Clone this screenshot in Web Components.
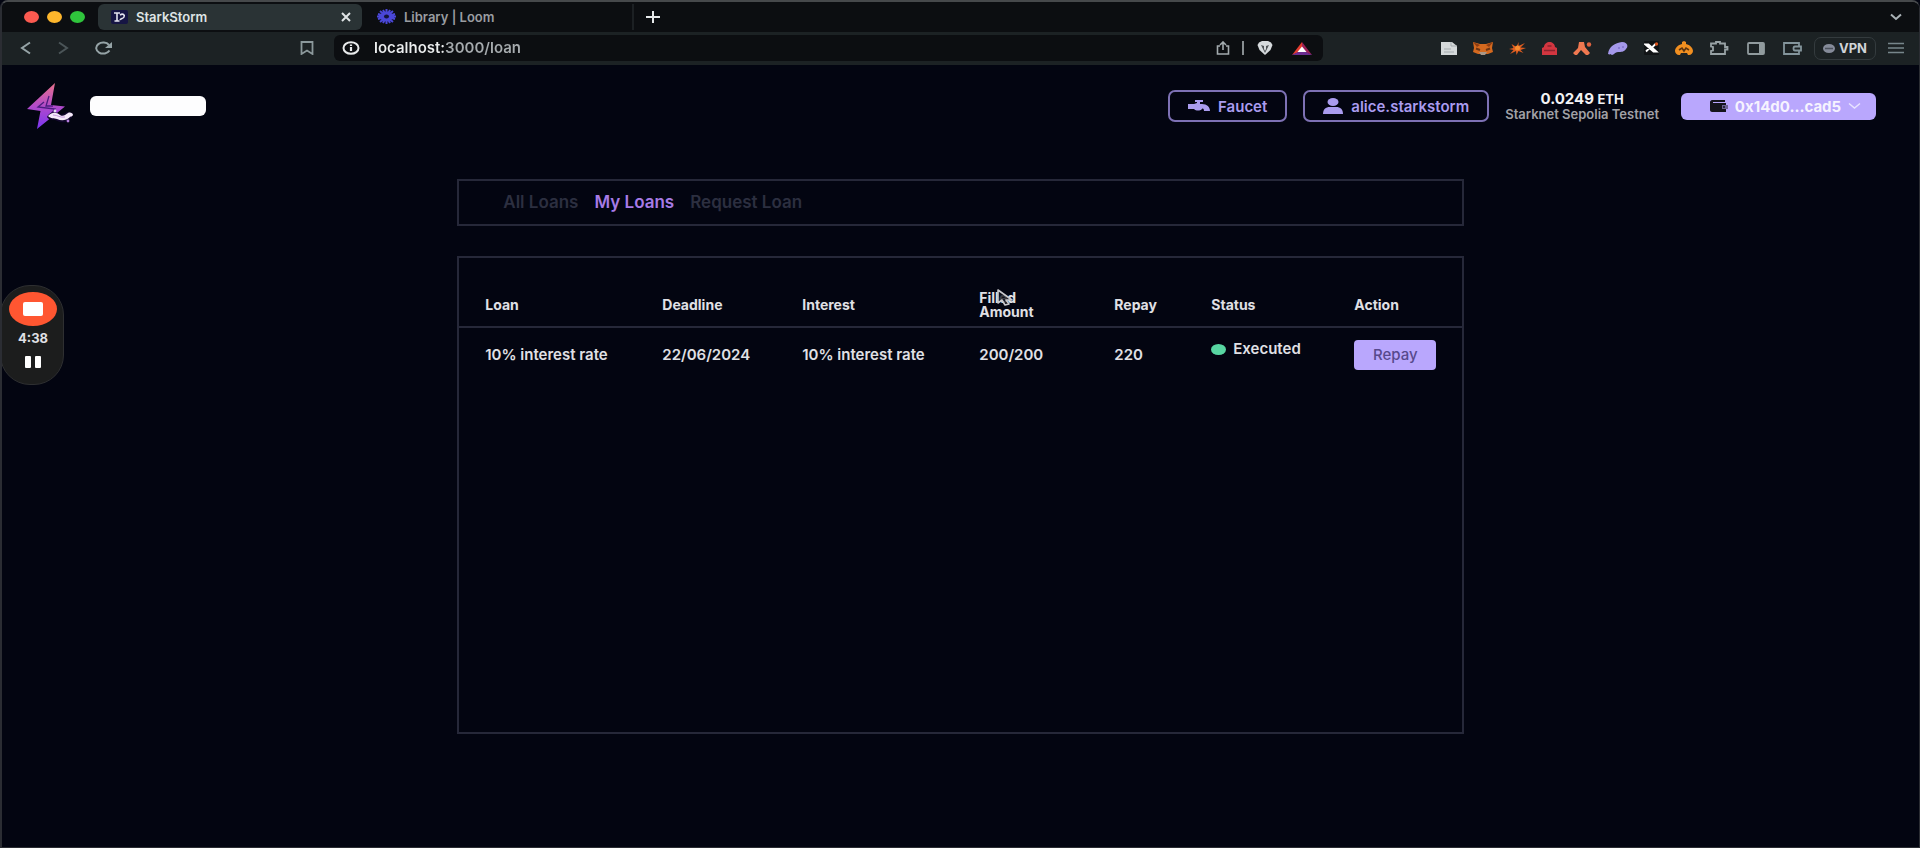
<!DOCTYPE html>
<html lang="en">
<head>
<meta charset="utf-8">
<title>StarkStorm</title>
<style>
html,body{margin:0;min-height:100%;background:#030511}
body{font-family:Inter,"Liberation Sans",sans-serif;font-weight:600;color:#e0e0e5}
</style>
</head>
<body>
<stark-window></stark-window>
<script>
const ICONS = {
  close: [10,10,'<path d="M1 1l8 8M9 1l-8 8" stroke="#dfe3e5" stroke-width="2"/>'],
  plus: [14,12,'<path d="M7 0v12M0 6h14" stroke="#e6e9ea" stroke-width="2"/>'],
  tabfav: [17,14,'<rect width="17" height="14" rx="2" fill="#161544"/><path d="M3 3h6M6 3v8M3.500 11h5M9 5c3-2 5 0 4 2s-3 1-4 3" stroke="#e4e4ef" stroke-width="1.600" fill="none"/>'],
  loom: [19,15,'<g fill="none" stroke="#4a47d8" stroke-width="2"><path d="M9.500 0v15M0 7.500h19M3 2l13 11M16 2L3 13M6 1l7 13M13 1L6 14M1 5l17 5M18 5L1 10"/></g><ellipse cx="9.500" cy="7.500" rx="6.500" ry="5" fill="#4a47d8"/><ellipse cx="9.500" cy="7.500" rx="2.500" ry="2" fill="#14143a"/>'],
  down: [14,8,'<path d="M2 1.500l5 4.500 5-4.500" fill="none" stroke="#aab2b6" stroke-width="2"/>'],
  back: [12,14,'<path d="M10 1.500L2 7l8 5.500" fill="none" stroke="#95a3a6" stroke-width="2"/>'],
  forward: [12,14,'<path d="M2 1.500L10 7l-8 5.500" fill="none" stroke="#4b5558" stroke-width="2"/>'],
  reload: [19,14,'<path d="M15.500 9.500A7 5.500 0 1 1 15 4" fill="none" stroke="#95a3a6" stroke-width="2"/><path d="M18 1v6h-7z" fill="#95a3a6"/>'],
  bookmark: [14,14,'<path d="M1.500 1h11v12L7 9.500 1.500 13z" fill="none" stroke="#8b989b" stroke-width="1.800"/>'],
  info: [18,14,'<ellipse cx="9" cy="7" rx="7.500" ry="5.800" fill="none" stroke="#e8eaeb" stroke-width="2"/><path d="M9 6v4M9 3.500V5" stroke="#e8eaeb" stroke-width="2.200"/>'],
  share: [14,14,'<path d="M4 5H1.500v8h11V5H10M7 9V1.500M4 4l3-3 3 3" fill="none" stroke="#a3abae" stroke-width="1.600"/>'],
  shield: [18,14,'<path d="M3 1.500L6 0h6l3 1.500 1.500 2.500-2 5L9 14 3.500 9l-2-5z" fill="#d6dadd"/><path d="M5 4l3 1v3l1 2 1-2V5l3-1-3 6-1 2-1-2z" fill="#4c5155"/>'],
  bat: [20,13,'<path d="M10 0L0 13l10-4z" fill="#e23b2e"/><path d="M10 0l10 13-10-4z" fill="#9a2157"/><path d="M0 13h20L10 8z" fill="#6b2d91"/><path d="M10 4.500L5.500 10h9z" fill="#fff"/>'],
  page: [16,13,'<path d="M0 0h11l5 4v9H0z" fill="#d5d9da"/><path d="M10 0v4h6M3 7h7M3 10h10" stroke="#a4abae" fill="none"/>'],
  fox: [20,13,'<path d="M0 0l7 2h6l7-2-1 6 1 4-5 2H5l-5-2 1-4z" fill="#d4691f"/><path d="M3 6.500l4 1.500M17 6.500L13 8" stroke="#6d3514" stroke-width="2"/><path d="M6 10h8l-2 3H8z" fill="#a99787"/><path d="M0 0l7 3-3 2zM20 0l-7 3 3 2z" fill="#8f3d12"/>'],
  spark: [17,13,'<path d="M9.500 0v4l6.500-3-4.500 4.500 5.500.5-5.500 2 3 3-5-2-2 4-.500-4L1 12l3.500-4-4.500-1 4.500-1-2-4 5 3z" fill="#de5d20"/><circle cx="8.500" cy="6" r="2.500" fill="#f68c30"/>'],
  red: [15,13,'<path d="M2 5c0-3 3-5 5.500-5S13 2 13 5l2 1v7H0V6z" fill="#d23640"/><path d="M2 8.500h11M5.500 4h4" stroke="#8c232d" stroke-width="1.400"/>'],
  argent: [19,13,'<path d="M6 0h5l1 5 5 6-2 2h-2l-5-5-4 5H2l-2-2 5-5z" fill="#f07850"/><circle cx="16" cy="2.500" r="2.200" fill="#e0633f"/>'],
  feather: [20,13,'<path d="M0 12C1 4 7 1 14 0c5 0 7 4 4 7-2 3-5 3-8 3-3 0-4 3-6 3-1 0-1-1-1-1s-1 1-3 0z" fill="#a498ea"/><path d="M10 6h2M14 5h2" stroke="#7f72cc" stroke-width="1.300"/>'],
  cross: [15,14,'<rect width="15" height="14" rx="1" fill="#111416"/><path d="M1.500 3.500h3l8 7h-3zM2 10.500l3-3M8.500 6l3-3" stroke="#fff" stroke-width="1.800" fill="#fff"/><circle cx="12.500" cy="3" r="1.700" fill="#d9551f"/>'],
  orange: [18,14,'<path d="M7 1l2-1 2 1v2c4 1 7 4 7 7 0 2-2 4-4 4h-1l-1-2H6l-1 2H4c-2 0-4-2-4-4 0-3 3-6 7-7z" fill="#f18f20"/><path d="M4 9l3-2 2 3 2-3 3 2" stroke="#5b3411" stroke-width="1.600" fill="none"/>'],
  puzzle: [20,14,'<path d="M2 2.500h5V1h4v1.500h5v3.500h2.500v2.500H16V13H2v-3l2-.500v-3.500l-2-.500z" fill="none" stroke="#98a2a5" stroke-width="1.800"/>'],
  panel: [18,13,'<rect x="1" y="1" width="16" height="11" rx="1" fill="none" stroke="#919b9e" stroke-width="1.800"/><path d="M12 1h5v11h-5z" fill="#919b9e"/>'],
  card: [19,13,'<path d="M16 4V1H1v11h15V9M18 4.500h-6c-2 0-2 4 0 4h6z" fill="none" stroke="#84959c" stroke-width="1.800"/>'],
  globe: [12,9,'<ellipse cx="6" cy="4.500" rx="6" ry="4.500" fill="#858b99"/><path d="M2 4.500h8" stroke="#4b515c" stroke-width="1.500"/>'],
  menu: [16,12,'<path d="M0 1.500h16M0 6h16M0 10.500h16" stroke="#77868b" stroke-width="1.600"/>'],
  faucet: [22,12,'<path d="M7 0h8v2h-3v2h2c5 0 8 3 8 7h-6c0-2-1-3-2-2-2 2-6 2-8 0H0V4h6l3-1V2H7z" fill="#aa9cef"/>'],
  user: [20,16,'<ellipse cx="10" cy="4" rx="5.500" ry="4" fill="#aa9cef"/><path d="M0 16c0-4.500 2.500-7 7-7h6c4.500 0 7 2.500 7 7z" fill="#aa9cef"/>'],
  wallet: [18,12,'<path d="M2 0h13v2H3v1h13v9H2c-1 0-2-1-2-2V2c0-1 1-2 2-2z" fill="#15151c"/><path d="M12 5h6v4h-6z" fill="#6c6394"/><circle cx="14" cy="7" r="1" fill="#15151c"/>'],
  chevron: [13,8,'<path d="M1 1.500L6.500 6 12 1.500" fill="none" stroke="#e8e3ff" stroke-width="1.500"/>'],
  pause: [16,12,'<path d="M1 1h4v10H1zM11 1h4v10h-4z" fill="#fff" stroke="#fff" stroke-width="2" stroke-linejoin="round"/>'],
  cursor: [17,18,'<path d="M1 1v13l4-3 3 5 4-1-3-4h6z" fill="#11131c" fill-opacity=".8" stroke="#c9c9cd" stroke-width="1.600" stroke-linejoin="round"/>'],
  bolt: [46,46,'<defs><linearGradient id="g" x1="0" y1="0" x2="0" y2="1"><stop offset="0" stop-color="#e8718b"/><stop offset=".5" stop-color="#b24bc9"/><stop offset="1" stop-color="#7a35f2"/></linearGradient></defs><path d="M28 0L24 22l14 1.500L10 46l3.500-18L0 26z" fill="url(#g)"/><path d="M22 13l-3 10h7M17 19l-6 5 17 2-5 6" fill="none" stroke="#4b1c80" stroke-width="1.300"/><path d="M20 34c2-5 8-6 12-3 3 1 5 0 8-2l6 1c0 5-4 8-8 9-4 1-7-1-10-2-3 0-6 0-8-3z" fill="#12082c"/><path d="M21 33c4-4 8-4 12-1 3 2 5 0 8-2 2-1 5 0 5 2-1 2-2 1-3 2-4 4-9 4-13 2-3-1-6 0-9-3z" fill="#f5eafa"/><path d="M26 32c5 0 7 3 12 2" stroke="#c59adf" fill="none"/><circle cx="28" cy="28" r="1.400" fill="#e7dff5"/><circle cx="41" cy="38" r="1.400" fill="#b77ee0"/>']
};

function define(name, html, setup) {
  const t = document.createElement('template');
  t.innerHTML = html;
  customElements.define(name, class extends HTMLElement {
    constructor() {
      super();
      this.attachShadow({mode: 'open'}).append(t.content.cloneNode(true));
    }
    connectedCallback() { if (setup) setup(this, this.shadowRoot); }
  });
}

define('ui-icon', `<style>:host{display:inline-flex;flex:none}svg{display:block}</style><span></span>`, (el, root) => {
  const [w, h, body] = ICONS[el.getAttribute('name')];
  root.querySelector('span').innerHTML = `<svg width="${w}" height="${h}" viewBox="0 0 ${w} ${h}" aria-hidden="true">${body}</svg>`;
});

define('tab-strip', `
<style>
:host{display:flex;align-items:center;box-sizing:border-box;height:30px;background:#0c0e11;padding:0 16px 1px 22px;font-size:13px}
button{all:unset;box-sizing:border-box;display:flex;align-items:center}
.lights{display:flex;gap:8px;margin-right:13px}
.lights i{width:15px;height:12px;border-radius:50%;background:#fb5a50}
.lights i:nth-child(2){background:#fdb62c}.lights i:nth-child(3){background:#2fc43c}
.tab{height:26px;border-radius:6px;padding:0 11px 0 13px;gap:8px;color:#dfe3e4}
.active{width:264px;background:#2a3335}
.active ui-icon:last-child{margin-left:auto}
.idle{width:272px;color:#9a9da1;border-right:2px solid #1c2023;border-radius:0;padding-left:15px}
.add{margin-left:12px}.more{margin-left:auto}
</style>
<div class="lights"><i></i><i></i><i></i></div>
<button class="tab active"><ui-icon name="tabfav"></ui-icon><span>StarkStorm</span><ui-icon name="close"></ui-icon></button>
<button class="tab idle"><ui-icon name="loom"></ui-icon><span>Library | Loom</span></button>
<button class="add" aria-label="New tab"><ui-icon name="plus"></ui-icon></button>
<button class="more" aria-label="Search tabs"><ui-icon name="down"></ui-icon></button>`);

define('tool-bar', `
<style>
:host{display:flex;align-items:center;box-sizing:border-box;height:33px;background:#1c2224;padding:0 15px 1px 18px}
button{all:unset;display:flex}
.nav{display:flex;gap:25px;width:280px;align-items:center}
.address{display:flex;align-items:center;box-sizing:border-box;flex:1;height:26px;margin-left:20px;border-radius:6px;background:#0c0e11;padding:0 11px 0 8px}
input{all:unset;flex:1;min-width:0;margin-left:14px;font-size:15px;line-height:20px;color:transparent;background:linear-gradient(90deg,#eceeef 71px,#a6abae 71px);-webkit-background-clip:text;background-clip:text}
.tools{display:flex;align-items:center;gap:18px}
.bar{width:2px;height:14px;background:#888e91;margin:0 -6px}
.ext{display:flex;align-items:center;gap:16px;margin-left:118px}
.side{display:flex;align-items:center;gap:18px;margin:0 12px 0 16px}
.vpn{box-sizing:border-box;height:23px;width:62px;border:1px solid #343b3e;border-radius:7px;align-items:center;justify-content:center;gap:4px;font-size:13px;font-weight:700;color:#d0d4d8}
.menu{margin-left:12px}
</style>
<div class="nav"><button aria-label="Back"><ui-icon name="back"></ui-icon></button><button aria-label="Forward"><ui-icon name="forward"></ui-icon></button><button aria-label="Reload"><ui-icon name="reload"></ui-icon></button></div>
<button aria-label="Bookmark"><ui-icon name="bookmark"></ui-icon></button>
<div class="address"><ui-icon name="info"></ui-icon><input aria-label="Address" value="localhost:3000/loan">
<div class="tools"><ui-icon name="share"></ui-icon><span class="bar"></span><ui-icon name="shield"></ui-icon><ui-icon name="bat"></ui-icon></div></div>
<div class="ext"><ui-icon name="page"></ui-icon><ui-icon name="fox"></ui-icon><ui-icon name="spark"></ui-icon><ui-icon name="red"></ui-icon><ui-icon name="argent"></ui-icon><ui-icon name="feather"></ui-icon><ui-icon name="cross"></ui-icon><ui-icon name="orange"></ui-icon></div>
<div class="side"><ui-icon name="puzzle"></ui-icon><ui-icon name="panel"></ui-icon><ui-icon name="card"></ui-icon></div>
<button class="vpn"><ui-icon name="globe"></ui-icon>VPN</button>
<button class="menu" aria-label="Menu"><ui-icon name="menu"></ui-icon></button>`);

define('outline-button', `
<style>
:host{display:block}
button{all:unset;box-sizing:border-box;display:flex;align-items:center;gap:8px;height:32px;padding:0 18px;border:2px solid #7d71b4;border-radius:7px;color:#aa9cef;font-size:15px}
</style><button><slot name="icon"></slot><slot></slot></button>`);

define('app-header', `
<style>
:host{display:flex;align-items:center;padding:17px 43px 0 25px;height:48px}
a{display:flex}
.name{all:unset;width:116px;height:20px;border-radius:6px;background:#fdfdfe;margin-left:17px}
.actions{display:flex;align-items:center;gap:16px;margin-left:auto}
.balance{text-align:center;font-size:13px;line-height:14px;color:#a1a1a6}
.balance strong{display:block;font-size:15px;line-height:16px;font-weight:700;color:#f2f2f4}
.wallet{all:unset;box-sizing:border-box;display:flex;align-items:center;justify-content:center;gap:7px;width:195px;height:27px;border-radius:6px;background:#b9a7fd;color:#f6f3ff;font-size:15px;font-weight:700;padding-left:14px;margin-left:6px}
.balance small{font-size:13px}
</style>
<a href="#" aria-label="StarkStorm home"><ui-icon name="bolt"></ui-icon></a>
<button class="name" aria-label="StarkStorm"></button>
<div class="actions">
<outline-button><ui-icon slot="icon" name="faucet"></ui-icon>Faucet</outline-button>
<outline-button><ui-icon slot="icon" name="user"></ui-icon>alice.starkstorm</outline-button>
<div class="balance"><strong>0.0249 <small>ETH</small></strong>Starknet Sepolia Testnet</div>
<button class="wallet"><ui-icon name="wallet"></ui-icon>0x14d0...cad5<ui-icon name="chevron"></ui-icon></button>
</div>`);

define('loan-nav', `
<style>
:host{display:block;box-sizing:border-box;border:2px solid #262839}
nav{display:flex;align-items:center;box-sizing:border-box;gap:16px;height:43px;padding:0 44px 1px;font-size:17px}
a{color:#2c2f40;text-decoration:none}
a[aria-current]{color:#a77be6}
</style>
<nav><a href="#all">All Loans</a><a href="#mine" aria-current="page">My Loans</a><a href="#request">Request Loan</a></nav>`);

define('loan-table', `
<style>
:host{display:block;box-sizing:border-box;min-height:478px;border:2px solid #262839}
table{width:100%;table-layout:fixed;border-collapse:collapse;font-size:15px}
th,td{padding:0 0 0 26px;text-align:left;white-space:nowrap}
th{height:43px;padding-top:25px;border-bottom:2px solid #262839;font-size:14px;line-height:14px;font-weight:700;vertical-align:middle}
td{padding-top:12px;height:30px;line-height:30px}
.status{vertical-align:top}
.status span{display:flex;align-items:center;gap:7px;line-height:18px}
.status i{width:15px;height:11px;border-radius:50%;background:#58d6a2}
button{all:unset;display:block;width:82px;height:30px;line-height:30px;border-radius:4px;background:#b9a7fd;color:#57498c;text-align:center;font-size:15px;font-weight:500}
</style>
<table>
<colgroup><col style="width:177px"><col style="width:140px"><col style="width:177px"><col style="width:135px"><col style="width:97px"><col style="width:143px"><col style="width:134px"></colgroup>
<thead><tr><th>Loan</th><th>Deadline</th><th>Interest</th><th>Filled<br>Amount</th><th>Repay</th><th>Status</th><th>Action</th></tr></thead>
<tbody><tr><td>10% interest rate</td><td>22/06/2024</td><td>10% interest rate</td><td>200/200</td><td>220</td><td class="status"><span><i></i>Executed</span></td><td><button>Repay</button></td></tr></tbody>
</table>`);

define('screen-recorder', `
<style>
:host{display:flex;box-sizing:border-box;flex-direction:column;align-items:center;width:64px;height:100px;padding:6px 0 0 2px;border:1px solid #2e2f31;border-radius:30px;background:#1c1d1d}
button{all:unset;display:flex;align-items:center;justify-content:center}
.stop{width:48px;height:34px;border-radius:50%;background:#ff5631}
.stop i{width:20px;height:14px;border-radius:2px;background:#fff}
span{font-size:13px;line-height:16px;margin:4px 0 10px;font-weight:700}
</style>
<button class="stop" aria-label="Stop recording"><i></i></button><span>4:38</span><button aria-label="Pause"><ui-icon name="pause"></ui-icon></button>`);

define('stark-window', `
<style>
:host{display:block;position:relative;box-sizing:border-box;min-height:100vh;border:solid #2b2d33;border-width:2px 1px 1px 2px;border-top-color:#46494b;border-radius:8px 8px 0 0;overflow:hidden;background:#030511}
main{width:clamp(900px,52.5%,1400px);margin:49px auto 0}
loan-table{margin-top:30px}
screen-recorder{position:absolute;left:-2px;top:283px}
.cursor{position:absolute;left:calc(50% + 36px);top:287px}
</style>
<tab-strip></tab-strip>
<tool-bar></tool-bar>
<app-header></app-header>
<main><loan-nav></loan-nav><loan-table></loan-table></main>
<screen-recorder></screen-recorder>
<ui-icon class="cursor" name="cursor"></ui-icon>`);
</script>
</body>
</html>
